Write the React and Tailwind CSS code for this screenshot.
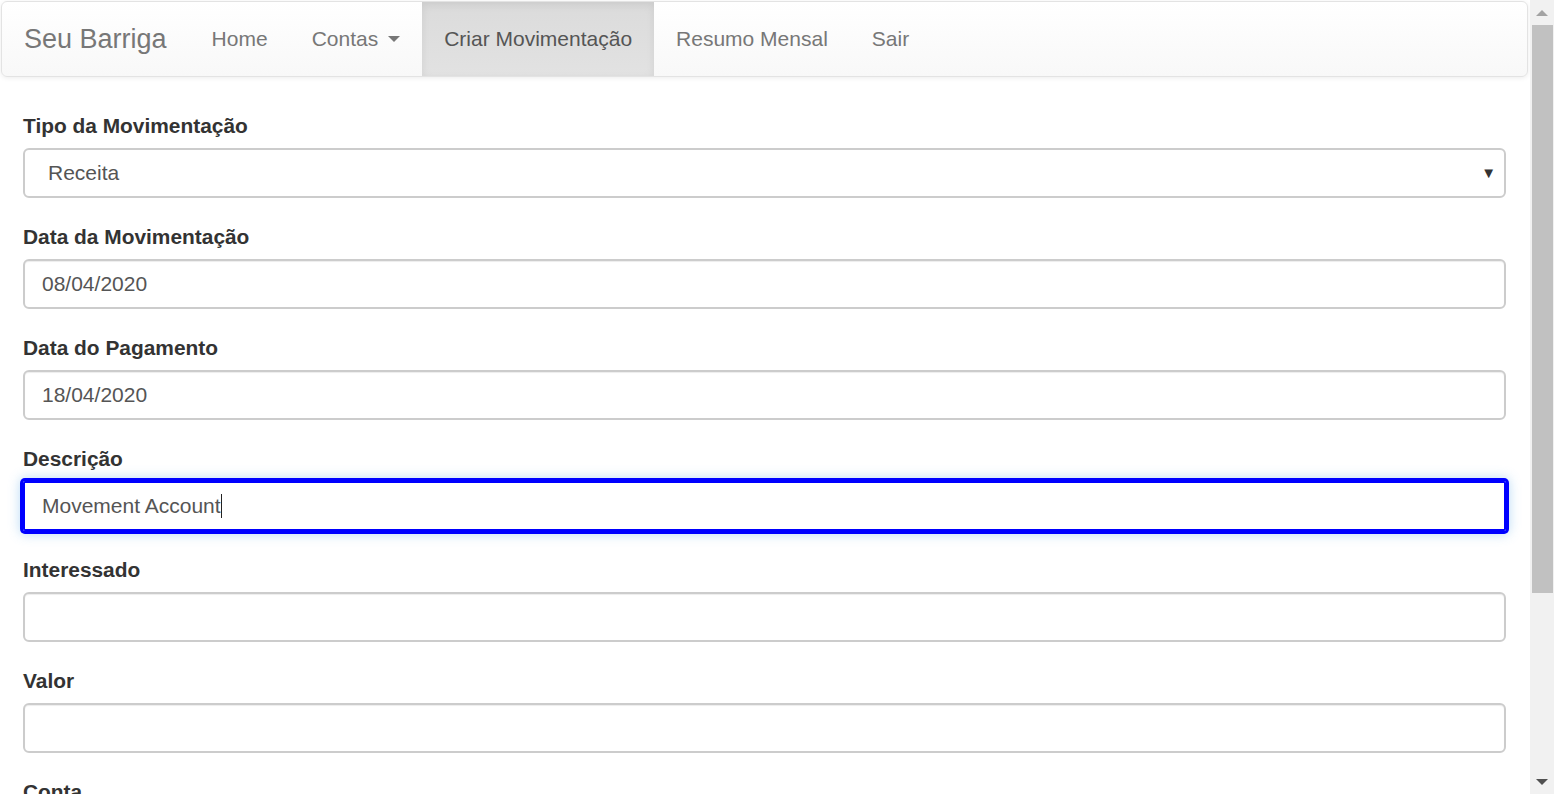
import React from "react";

const fields = [
  { label: "Data da Movimentação", value: "08/04/2020" },
  { label: "Data do Pagamento", value: "18/04/2020" },
  { label: "Descrição", value: "Movement Account", focused: true },
  { label: "Interessado", value: "" },
  { label: "Valor", value: "" },
];

function Label({ children }) {
  return (
    <div className="font-bold text-[20.9px] leading-[29px] mb-[8px] text-[#333]">
      {children}
    </div>
  );
}

function App() {
  return (
    <div
      className="h-screen w-full flex overflow-hidden bg-white"
      style={{ fontFamily: '"Liberation Sans", Arial, sans-serif' }}
    >
      <div className="flex-1 overflow-hidden">
        {/* Navbar */}
        <div className="mt-[1px] ml-[1px] mr-[2px] h-[76px] border border-[#e3e3e3] rounded-[6px] bg-gradient-to-b from-white to-[#f8f8f8] shadow-[0_1px_5px_rgba(0,0,0,0.08)] flex items-stretch overflow-hidden">
          <div className="pl-[22px] pr-[23px] flex items-center text-[27px] text-[#777]">Seu Barriga</div>
          <div className="px-[22px] flex items-center text-[21px] text-[#777]">Home</div>
          <div className="px-[22px] flex items-center text-[21px] text-[#777]">
            Contas
            <span className="ml-[10px] inline-block w-0 h-0 border-l-[6px] border-r-[6px] border-t-[6px] border-l-transparent border-r-transparent border-t-[#777]" />
          </div>
          <div className="px-[22px] flex items-center text-[21px] text-[#555] bg-gradient-to-b from-[#dbdbdb] to-[#e2e2e2] shadow-[inset_0_3px_9px_rgba(0,0,0,0.075)]">
            Criar Movimentação
          </div>
          <div className="px-[22px] flex items-center text-[21px] text-[#777]">Resumo Mensal</div>
          <div className="px-[22px] flex items-center text-[21px] text-[#777]">Sair</div>
        </div>

        {/* Form */}
        <div className="pl-[23px] pr-[24px] pt-[34px]">
          <div className="mb-[24px]">
            <Label>Tipo da Movimentação</Label>
            <div className="h-[50px] border-2 border-[#ccc] rounded-[6px] pl-[23px] pr-[8px] flex items-center justify-between text-[21px] text-[#555]">
              <span>Receita</span>
              <span className="text-[15px] text-[#333]">▼</span>
            </div>
          </div>

          {fields.map((f) => (
            <div key={f.label} className="mb-[24px]">
              <Label>{f.label}</Label>
              <div
                className={
                  f.focused
                    ? "h-[50px] border-2 border-[#0000ff] rounded-[2px] px-[17px] flex items-center text-[21px] text-[#555] shadow-[0_0_0_3px_#0000ff,0_0_12px_3px_rgba(102,175,233,0.45)]"
                    : "h-[50px] border-2 border-[#ccc] rounded-[6px] px-[17px] flex items-center text-[21px] text-[#555] shadow-[inset_0_1px_1px_rgba(0,0,0,0.075)]"
                }
              >
                <span>{f.value}</span>
                {f.focused && <span className="inline-block w-[1px] h-[24px] bg-[#222]" />}
              </div>
            </div>
          ))}

          <div className="mb-[24px]">
            <Label>Conta</Label>
          </div>
        </div>
      </div>

      {/* Scrollbar */}
      <div className="w-[24px] shrink-0 bg-[#f1f1f1] flex flex-col items-center">
        <div className="h-[25px] w-full flex items-center justify-center">
          <span className="w-0 h-0 border-l-[6px] border-r-[6px] border-b-[6px] border-l-transparent border-r-transparent border-b-[#a3a3a3]" />
        </div>
        <div className="ml-[2px] mr-[1px] self-stretch h-[568px] bg-[#c1c1c1]" />
        <div className="flex-1" />
        <div className="h-[25px] w-full flex items-center justify-center">
          <span className="w-0 h-0 border-l-[6px] border-r-[6px] border-t-[6px] border-l-transparent border-r-transparent border-t-[#505050]" />
        </div>
      </div>
    </div>
  );
}

export default App;
